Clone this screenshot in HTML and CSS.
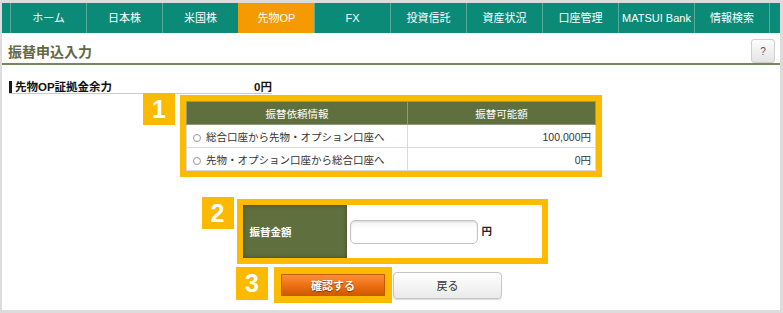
FILE: index.html
```html
<!DOCTYPE html>
<html lang="ja">
<head>
    <meta charset="UTF-8">
    <meta name="viewport" content="width=device-width, initial-scale=1.0">
    <title>振替申込入力</title>
    <link rel="stylesheet" href="styles.css">
</head>
<body>
    <div class="page">
        <ul class="gnav">
            <li>ホーム</li>
            <li>日本株</li>
            <li>米国株</li>
            <li class="current">先物OP</li>
            <li>FX</li>
            <li>投資信託</li>
            <li>資産状況</li>
            <li>口座管理</li>
            <li>MATSUI Bank</li>
            <li>情報検索</li>
        </ul>

        <div class="title-bar">
            <h1>振替申込入力</h1>
            <button class="help-btn">?</button>
        </div>

        <div class="margin-row">
            <span class="label">先物OP証拠金余力</span>
            <span class="value">0円</span>
        </div>

        <!-- step 1: transfer direction -->
        <div class="step step-1">
            <div class="frame">
                <span class="badge">1</span>
                <table class="transfer-table">
                    <tr>
                        <th class="col-info">振替依頼情報</th>
                        <th>振替可能額</th>
                    </tr>
                    <tr>
                        <td><span class="radio"></span>総合口座から先物・オプション口座へ</td>
                        <td class="amount">100,000円</td>
                    </tr>
                    <tr>
                        <td><span class="radio"></span>先物・オプション口座から総合口座へ</td>
                        <td class="amount">0円</td>
                    </tr>
                </table>
            </div>
        </div>

        <!-- step 2: amount -->
        <div class="step step-2">
            <div class="frame">
                <span class="badge">2</span>
                <table class="amount-table">
                    <tr>
                        <th>振替金額</th>
                        <td><input type="text" class="amount-input"><span class="unit">円</span></td>
                    </tr>
                </table>
            </div>
        </div>

        <!-- step 3: buttons -->
        <div class="actions">
            <div class="frame frame-btn">
                <span class="badge">3</span>
                <button class="confirm-btn">確認する</button>
            </div>
            <button class="back-btn">戻る</button>
        </div>
    </div>
</body>
</html>
```

FILE: styles.css
```css
* {
    box-sizing: border-box;
}

body {
    margin: 0;
    padding: 3px 3px 3px 2px;
    background: #dcdcdc;
    font-family: "Liberation Sans", "Noto Sans CJK JP", sans-serif;
    color: #333;
}

.page {
    width: 778px;
    height: 307px;
    background: #fff;
}

/* global nav */
.gnav {
    display: flex;
    list-style: none;
    margin: 0;
    padding: 0 0 0 8px;
    height: 30px;
    background: #0b8a78;
}

.gnav li {
    width: 76px;
    border-left: 1px solid #5aaa9b;
    color: #fff;
    font-size: 11px;
    line-height: 30px;
    text-align: center;
    white-space: nowrap;
}

.gnav li:last-child {
    border-right: 1px solid #5aaa9b;
}

.gnav li.current {
    background: #f59a00;
    border-left-color: #f59a00;
}

/* title */
.title-bar {
    display: flex;
    align-items: flex-end;
    justify-content: space-between;
    height: 32px;
    padding: 0 5px 0 6px;
    border-bottom: 2px solid #76875a;
}

.title-bar h1 {
    margin: 0 0 1px 0;
    font-size: 14px;
    line-height: 20px;
    font-weight: bold;
    color: #63693f;
}

.help-btn {
    width: 24px;
    height: 24px;
    padding: 0;
    border: 1px solid #cfcfcf;
    border-radius: 3px;
    background: linear-gradient(#fdfdfd, #e4e4e4);
    color: #555;
    font-size: 10px;
    font-family: inherit;
}

/* margin balance */
.margin-row {
    display: flex;
    justify-content: space-between;
    width: 263px;
    margin: 14px 0 0 7px;
    padding-top: 2px;
    border-bottom: 1px solid #cbcbcb;
    font-size: 11.5px;
    font-weight: bold;
    color: #111;
}

.margin-row .label {
    border-left: 3px solid #1a1a1a;
    padding-left: 3px;
    line-height: 12px;
}

.margin-row .value {
    line-height: 12px;
}

/* steps */
.step {
    display: flex;
    justify-content: center;
}

.step-1 {
    margin-top: 1px;
}

.step-2 {
    margin-top: 22px;
    padding-left: 2px;
}

.frame {
    position: relative;
    border: 6px solid #fcbb00;
}

.badge {
    position: absolute;
    top: -8px;
    left: -43px;
    width: 32px;
    height: 32px;
    background: #fbb900;
    color: #fff;
    font-size: 25px;
    font-weight: bold;
    line-height: 32px;
    text-align: center;
}

.step-2 .badge {
    left: -41px;
}

.transfer-table {
    width: 410px;
    border-collapse: collapse;
    font-size: 10.5px;
}

.transfer-table th {
    height: 23px;
    padding: 0;
    background: #5f6f3d;
    border: 1px solid #8f9a78;
    color: #fff;
    font-weight: normal;
}

.transfer-table .col-info {
    width: 221px;
}

.transfer-table td {
    height: 23px;
    padding: 0 4px 0 6px;
    border: 1px solid #dadada;
    color: #333;
}

.transfer-table .amount {
    text-align: right;
}

.radio {
    display: inline-block;
    width: 8px;
    height: 8px;
    margin-right: 5px;
    border: 1px solid #999;
    border-radius: 50%;
    vertical-align: -1px;
}

.amount-table {
    width: 299px;
    border-collapse: collapse;
}

.amount-table th {
    width: 104px;
    height: 53px;
    padding: 0 0 0 7px;
    background: #5f6f3d;
    box-shadow: inset 0 0 4px rgba(0, 0, 0, 0.35);
    color: #fff;
    font-size: 10.5px;
    font-weight: bold;
    text-align: left;
}

.amount-table td {
    padding: 0 0 0 3px;
    font-size: 10.5px;
    font-weight: bold;
    color: #222;
}

.amount-input {
    width: 128px;
    height: 24px;
    margin: 0 4px 0 0;
    border: 1px solid #c2c2c2;
    border-radius: 5px;
    background: linear-gradient(#f4f4f4, #fff 40%);
    box-shadow: inset 0 1px 2px rgba(0, 0, 0, 0.12);
    vertical-align: middle;
}

/* buttons */
.actions {
    display: flex;
    justify-content: center;
    align-items: center;
    margin-top: 3px;
    padding-right: 6px;
}

.frame-btn {
    border-width: 7px;
}

.frame-btn .badge {
    top: -7px;
    left: -45px;
    height: 33px;
}

.confirm-btn {
    display: block;
    width: 104px;
    height: 22px;
    padding: 0;
    border: 1px solid #c95a00;
    background: linear-gradient(#fc8f35, #ec7115 50%, #d05a00);
    color: #fff;
    font-family: inherit;
    font-size: 11px;
    font-weight: bold;
    text-shadow: 0 1px 1px rgba(0, 0, 0, 0.45);
}

.back-btn {
    width: 109px;
    height: 27px;
    margin-left: 1px;
    padding: 0;
    border: 1px solid #c6c6c6;
    border-radius: 4px;
    background: linear-gradient(#fff, #eaeaea);
    box-shadow: 0 1px 1px rgba(0, 0, 0, 0.15);
    color: #333;
    font-family: inherit;
    font-size: 11px;
}
```
